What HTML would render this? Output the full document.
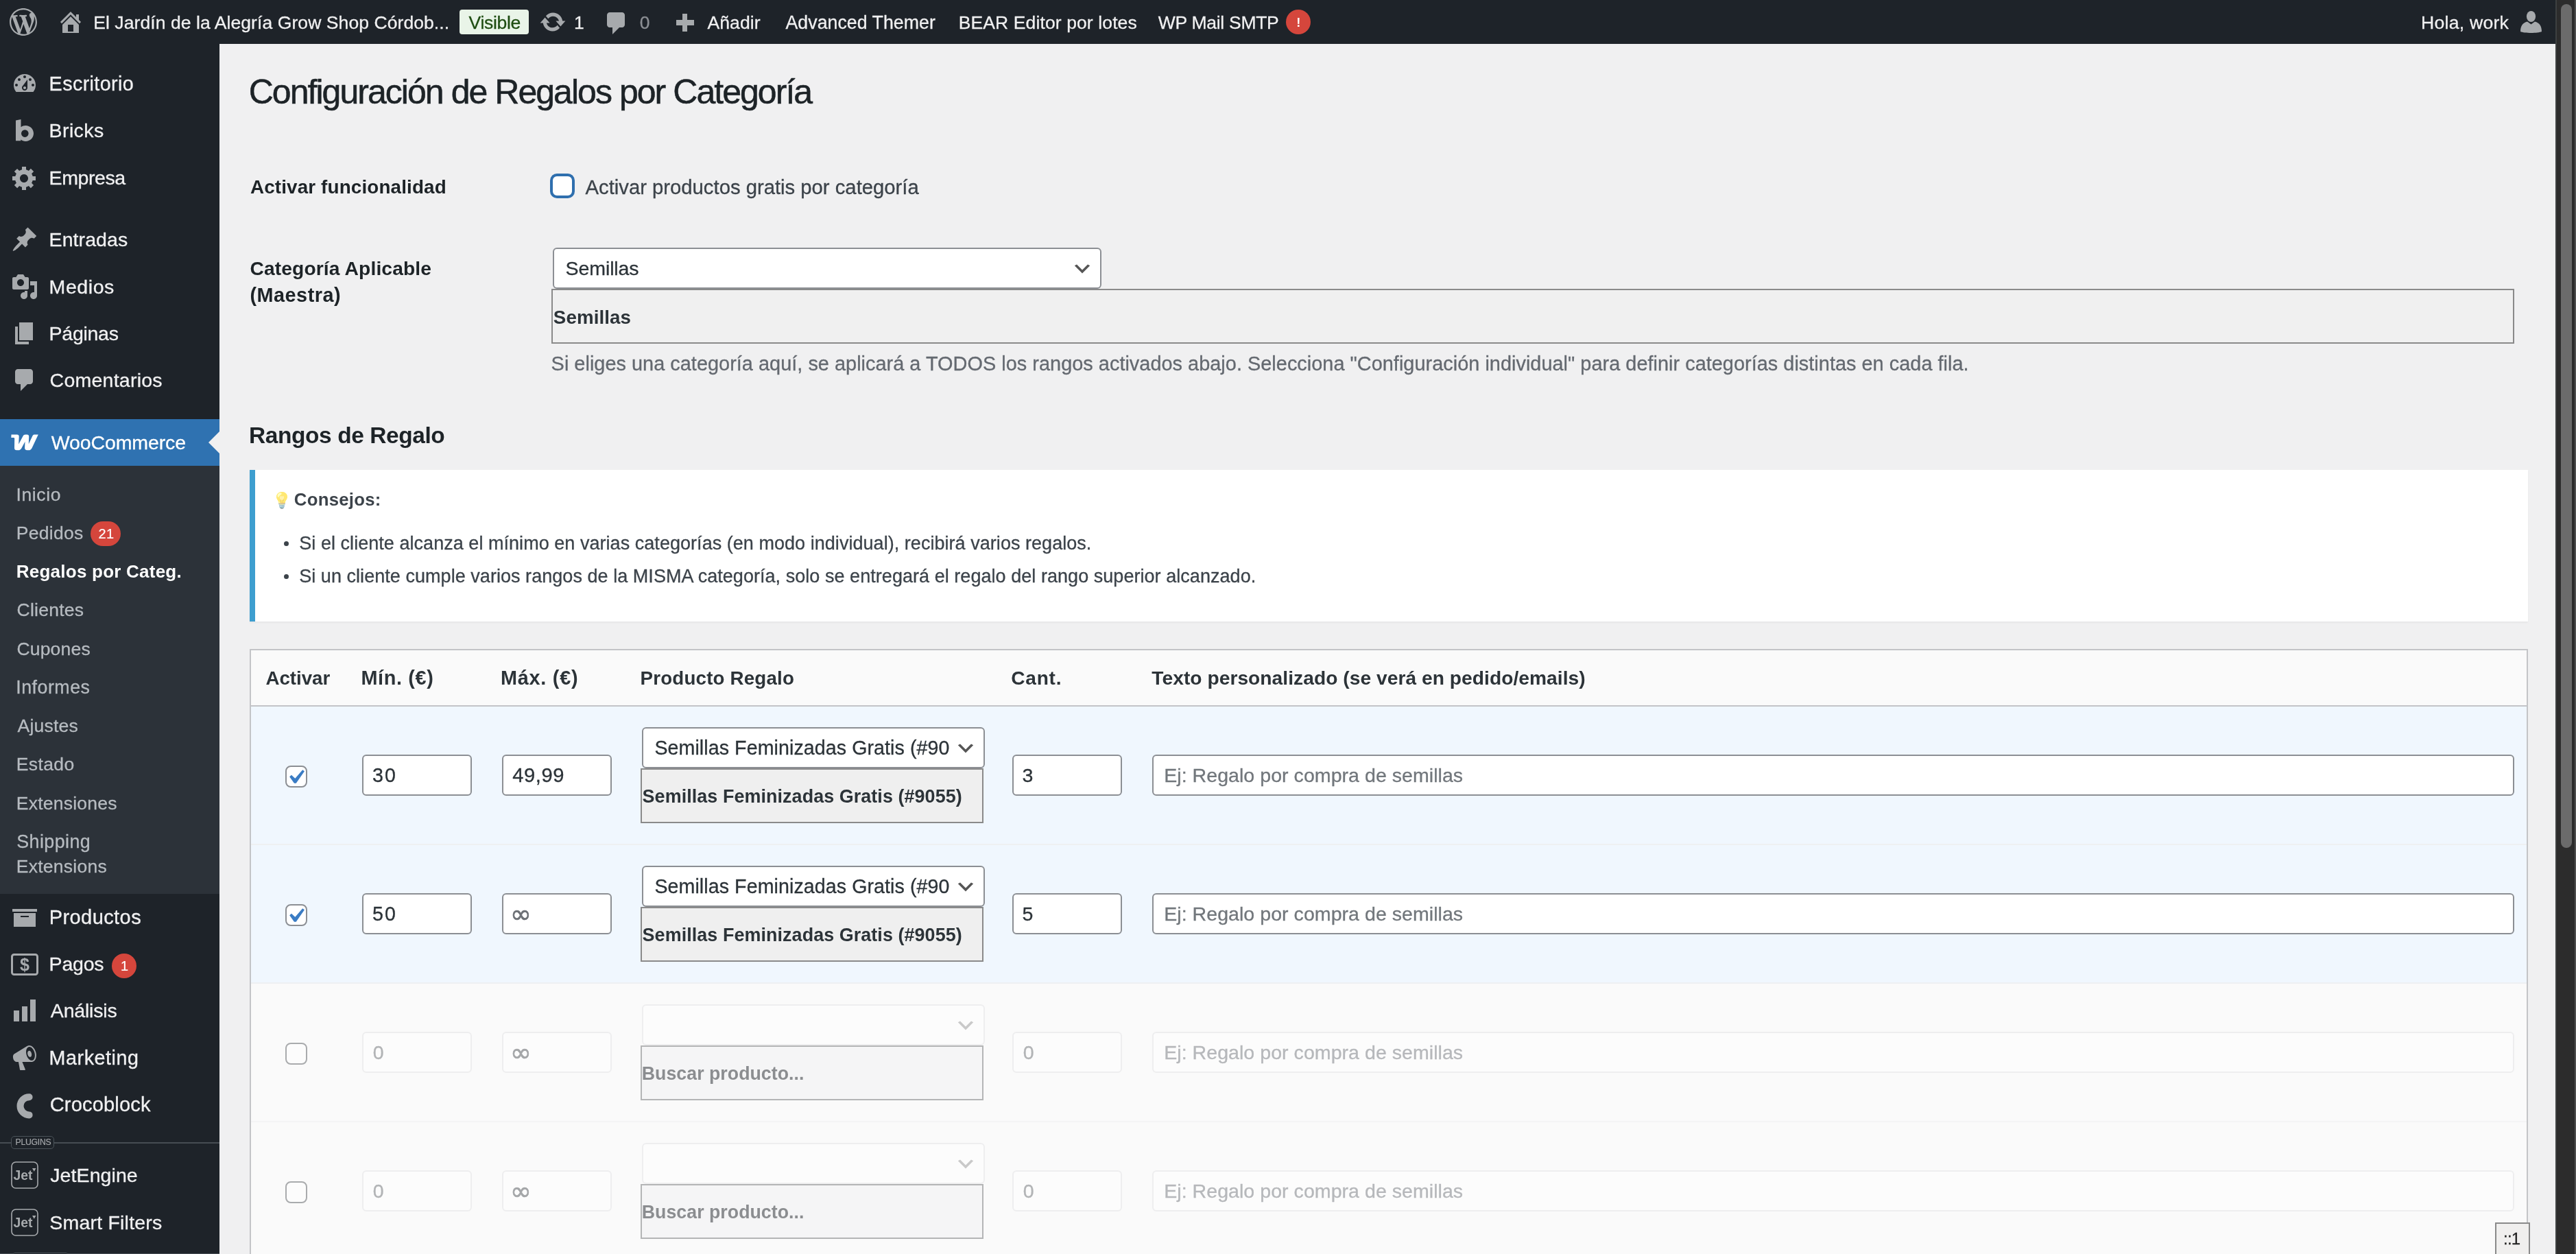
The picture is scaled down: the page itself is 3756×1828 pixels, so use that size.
<!DOCTYPE html>
<html lang="es"><head><meta charset="utf-8"><title>Configuración de Regalos por Categoría</title><style>html,body{margin:0;padding:0}body{width:3756px;height:1828px;overflow:hidden;position:relative;background:#f0f0f1;font-family:"Liberation Sans",sans-serif}
.b{position:absolute;display:block}.t{position:absolute;white-space:nowrap;display:block}</style></head><body><div class="b" style="left:0;top:0;width:3756px;height:1828px;will-change:transform">
<div class="b" style="left:0px;top:0px;width:3726px;height:64px;background:#1e2329"></div>
<div class="b" style="left:0px;top:64px;width:320px;height:1764px;background:#1e2329"></div>
<div class="b" style="left:3726px;top:0px;width:30px;height:1828px;background:#2c2c2c"></div>
<div class="b" style="left:3726px;top:0px;width:2px;height:1828px;background:#3d4040"></div>
<div class="b" style="left:3754px;top:0px;width:2px;height:1828px;background:#4f4f4f"></div>
<div class="b" style="left:3734px;top:6px;width:16px;height:1230px;background:#6b6b6b;border-radius:8px"></div>
<svg class="b" style="left:14px;top:12px" width="40" height="40" viewBox="0 0 20 20"><path fill="#a7aaad" d="M20 10c0-5.51-4.49-10-10-10C4.48 0 0 4.49 0 10c0 5.52 4.48 10 10 10 5.51 0 10-4.48 10-10zM7.78 15.37L4.37 6.22c.55-.02 1.17-.08 1.17-.08.5-.06.44-1.13-.06-1.11 0 0-1.45.11-2.37.11-.18 0-.37 0-.58-.01C4.12 2.69 6.87 1.11 10 1.11c2.33 0 4.45.87 6.05 2.34-.68-.11-1.65.39-1.65 1.58 0 .74.45 1.36.9 2.1.35.61.55 1.36.55 2.46 0 1.49-1.4 5-1.4 5l-3.03-8.37c.54-.02.82-.17.82-.17.5-.05.44-1.25-.06-1.22 0 0-1.44.12-2.38.12-.87 0-2.33-.12-2.33-.12-.5-.03-.56 1.2-.06 1.22l.92.08 1.26 3.41zM17.41 10c.24-.64.74-1.87.43-4.25.7 1.29 1.05 2.71 1.05 4.25 0 3.29-1.73 6.24-4.4 7.78.97-2.59 1.94-5.2 2.92-7.78zM6.1 18.09C3.12 16.65 1.11 13.53 1.11 10c0-1.3.23-2.48.72-3.59C3.25 10.3 4.67 14.2 6.1 18.09zm4.03-6.63l2.58 6.98c-.86.29-1.76.45-2.71.45-.79 0-1.57-.11-2.29-.33.81-2.38 1.62-4.74 2.42-7.1z"/></svg>
<svg class="b" style="left:83.4px;top:11.8px" width="40" height="40" viewBox="0 0 20 20"><path fill="#a7aaad" d="M16 8.5l1.53 1.53-1.06 1.06L10 4.62l-6.47 6.47-1.06-1.06L10 2.5l4 4v-2h2v4zm-6-2.46l6 5.99V18H4v-5.97zM12 17v-5H8v5h4z"/></svg>
<span id="t0" class="t" style="left:136.2px;top:16px;font-size:26.52px;line-height:34px;font-weight:400;color:#f0f0f1;letter-spacing:0.073px;-webkit-text-stroke:0.29px;">El Jardín de la Alegría Grow Shop Córdob...</span>
<div class="b" style="left:670px;top:14px;width:101px;height:36px;background:#e9f4e8;border-radius:4px"></div>
<span id="t1" class="t" style="left:683.6px;top:16px;font-size:26.52px;line-height:34px;font-weight:400;color:#1f4d12;letter-spacing:-0.315px;-webkit-text-stroke:0.29px;">Visible</span>
<svg class="b" style="left:786px;top:11.8px" width="40" height="40" viewBox="0 0 20 20"><path fill="#a7aaad" d="M10.2 3.28c3.53 0 6.43 2.61 6.92 6h2.08l-3.5 4-3.5-4h2.32c-.45-1.97-2.21-3.45-4.32-3.45-1.45 0-2.73.71-3.54 1.78L4.95 5.66C6.23 4.2 8.11 3.28 10.2 3.28zm-.4 13.44c-3.52 0-6.43-2.61-6.92-6H.8l3.5-4c1.17 1.33 2.33 2.67 3.5 4H5.48c.45 1.97 2.21 3.45 4.32 3.45 1.45 0 2.73-.71 3.54-1.78l1.71 1.95c-1.28 1.46-3.15 2.38-5.25 2.38z"/></svg>
<span id="t2" class="t" style="left:836.9px;top:16px;font-size:26.52px;line-height:34px;font-weight:400;color:#f0f0f1;letter-spacing:0.000px;-webkit-text-stroke:0.29px;">1</span>
<svg class="b" style="left:879px;top:14.4px" width="40" height="40" viewBox="0 0 20 20"><path fill="#a7aaad" d="M5 2h9c1.1 0 2 .9 2 2v7c0 1.1-.9 2-2 2h-2l-5 5v-5H5c-1.1 0-2-.9-2-2V4c0-1.1.9-2 2-2z"/></svg>
<span id="t3" class="t" style="left:932.8px;top:16px;font-size:26.52px;line-height:34px;font-weight:400;color:#8c8f94;letter-spacing:0.000px;-webkit-text-stroke:0.29px;">0</span>
<div class="b" style="left:985.5px;top:29.3px;width:26.2px;height:7.4px;background:#a7aaad"></div>
<div class="b" style="left:994.9px;top:20px;width:7.4px;height:26px;background:#a7aaad"></div>
<span id="t4" class="t" style="left:1031.4px;top:16px;font-size:26.57px;line-height:35px;font-weight:400;color:#f0f0f1;letter-spacing:0.093px;-webkit-text-stroke:0.29px;">Añadir</span>
<span id="t5" class="t" style="left:1145.5px;top:16px;font-size:26.74px;line-height:35px;font-weight:400;color:#f0f0f1;letter-spacing:0.024px;-webkit-text-stroke:0.29px;">Advanced Themer</span>
<span id="t6" class="t" style="left:1397.7px;top:16px;font-size:26.52px;line-height:34px;font-weight:400;color:#f0f0f1;letter-spacing:0.106px;-webkit-text-stroke:0.29px;">BEAR Editor por lotes</span>
<span id="t7" class="t" style="left:1688.8px;top:16px;font-size:26.52px;line-height:34px;font-weight:400;color:#f0f0f1;letter-spacing:-0.296px;-webkit-text-stroke:0.29px;">WP Mail SMTP</span>
<div class="b" style="left:1875px;top:14px;width:36px;height:36px;background:#d5463c;border-radius:18px"></div>
<span id="t8" class="t" style="left:1890.2px;top:21px;font-size:18.32px;line-height:24px;font-weight:700;color:#fff;letter-spacing:0.000px;">!</span>
<span id="t9" class="t" style="left:3530.0px;top:16px;font-size:26.61px;line-height:35px;font-weight:400;color:#f0f0f1;letter-spacing:0.239px;-webkit-text-stroke:0.29px;">Hola, work</span>
<svg class="b" style="left:3675px;top:16px" width="31" height="32" viewBox="0 0 31 32"><ellipse cx="15.5" cy="8" rx="6.6" ry="8" fill="#a7aaad"/><path fill="#a7aaad" d="M0 30C0 22 3 17.5 10 15.5l5.5 4 5.5-4c7 2 10 6.500 10 14.500c-5 2.600-26 2.600-31 0z"/></svg>
<svg class="b" style="left:16px;top:102.0px" width="40" height="40" viewBox="0 0 20 20"><path fill="#a7aaad" d="M3.76 16h12.48c1.1-1.37 1.76-3.11 1.76-5 0-4.42-3.58-8-8-8s-8 3.58-8 8c0 1.89.66 3.63 1.76 5zM10 4c.55 0 1 .45 1 1s-.45 1-1 1-1-.45-1-1 .45-1 1-1zM6 6c.55 0 1 .45 1 1s-.45 1-1 1-1-.45-1-1 .45-1 1-1zm8 0c.55 0 1 .45 1 1s-.45 1-1 1-1-.45-1-1 .45-1 1-1zm-5.37 5.55L12 7v6c0 1.1-.9 2-2 2s-2-.9-2-2c0-.57.24-1.08.63-1.45zM4 10c.55 0 1 .45 1 1s-.45 1-1 1-1-.45-1-1 .45-1 1-1zm12 0c.55 0 1 .45 1 1s-.45 1-1 1-1-.45-1-1 .45-1 1-1zm-5 3c0-.55-.45-1-1-1s-1 .45-1 1 .45 1 1 1 1-.45 1-1z"/></svg>
<span id="t10" class="t" style="left:71.6px;top:104px;font-size:28.74px;line-height:37px;font-weight:400;color:#f0f0f1;letter-spacing:0.383px;-webkit-text-stroke:0.32px;">Escritorio</span>
<span id="t11" class="t" style="left:71.6px;top:172px;font-size:28.56px;line-height:37px;font-weight:400;color:#f0f0f1;letter-spacing:0.372px;-webkit-text-stroke:0.31px;">Bricks</span>
<svg class="b" style="left:22.8px;top:174.0px" width="26" height="32" viewBox="0 0 26 32"><path fill="#a7aaad" fill-rule="evenodd" d="M0 1.500L7.500 0V11.300C9.500 9.800 11.800 9 14.300 9C20.800 9 26 14 26 20.500S20.800 32 14.300 32C11.600 32 9.300 31.200 7.300 29.600V31.300H0ZM13.300 15.300a5.300 5.300 0 1 0 0.010 0z"/></svg>
<svg class="b" style="left:16px;top:238.8px" width="40" height="40" viewBox="0 0 20 20"><path fill="#a7aaad" d="M18 12h-2.18c-.17.7-.44 1.35-.81 1.93l1.54 1.54-2.1 2.1-1.54-1.54c-.58.36-1.23.63-1.91.79V19H8v-2.18c-.68-.16-1.33-.43-1.91-.79l-1.54 1.54-2.12-2.12 1.54-1.54c-.36-.58-.63-1.23-.79-1.91H1V9.03h2.17c.16-.7.44-1.35.8-1.94L2.43 5.55l2.1-2.1 1.54 1.54c.58-.37 1.24-.64 1.93-.81V2h3v2.18c.68.16 1.33.43 1.91.79l1.54-1.54 2.12 2.12-1.54 1.54c.36.59.64 1.24.8 1.94H18V12zm-8.5 1.5c1.66 0 3-1.34 3-3s-1.34-3-3-3-3 1.34-3 3 1.34 3 3 3z"/></svg>
<span id="t12" class="t" style="left:71.6px;top:241px;font-size:28.56px;line-height:37px;font-weight:400;color:#f0f0f1;letter-spacing:-0.436px;-webkit-text-stroke:0.31px;">Empresa</span>
<svg class="b" style="left:16px;top:329.20000000000005px" width="40" height="40" viewBox="0 0 20 20"><path fill="#a7aaad" d="M10.44 3.02l1.82-1.82 6.36 6.35-1.83 1.82c-1.05-.68-2.48-.57-3.41.36l-.75.75c-.92.93-1.04 2.35-.35 3.41l-1.83 1.82-2.41-2.41-2.8 2.79c-.42.42-3.38 2.71-3.8 2.29s1.86-3.39 2.28-3.81l2.79-2.79L4.1 9.36l1.83-1.82c1.05.69 2.48.57 3.4-.36l.75-.75c.93-.92 1.05-2.35.36-3.41z"/></svg>
<span id="t13" class="t" style="left:71.6px;top:331px;font-size:28.56px;line-height:37px;font-weight:400;color:#f0f0f1;letter-spacing:0.045px;-webkit-text-stroke:0.31px;">Entradas</span>
<svg class="b" style="left:16px;top:397.6px" width="40" height="40" viewBox="0 0 20 20"><path fill="#a7aaad" d="M13 11V4c0-.55-.45-1-1-1h-1.67L9 1H5L3.67 3H2c-.55 0-1 .45-1 1v7c0 .55.45 1 1 1h10c.55 0 1-.45 1-1zM7 4.5c1.38 0 2.5 1.12 2.5 2.5S8.38 9.5 7 9.5 4.5 8.38 4.5 7 5.62 4.5 7 4.5zM14 6h5v10.5c0 1.38-1.12 2.5-2.5 2.5S14 17.88 14 16.5s1.12-2.5 2.5-2.5c.17 0 .34.02.5.05V9h-3V6zm-4 8.05V13h2v3.5c0 1.38-1.12 2.5-2.5 2.5S7 17.88 7 16.5 8.12 14 9.5 14c.17 0 .34.02.5.05z"/></svg>
<span id="t14" class="t" style="left:71.6px;top:400px;font-size:28.56px;line-height:37px;font-weight:400;color:#f0f0f1;letter-spacing:0.551px;-webkit-text-stroke:0.31px;">Medios</span>
<svg class="b" style="left:16px;top:466.0px" width="40" height="40" viewBox="0 0 20 20"><path fill="#a7aaad" d="M6 15V2h10v13H6zm-1 1h8v2H3V5h2v11z"/></svg>
<span id="t15" class="t" style="left:71.6px;top:468px;font-size:28.56px;line-height:37px;font-weight:400;color:#f0f0f1;letter-spacing:-0.298px;-webkit-text-stroke:0.31px;">Páginas</span>
<svg class="b" style="left:16px;top:534.4px" width="40" height="40" viewBox="0 0 20 20"><path fill="#a7aaad" d="M5 2h9c1.1 0 2 .9 2 2v7c0 1.1-.9 2-2 2h-2l-5 5v-5H5c-1.1 0-2-.9-2-2V4c0-1.1.9-2 2-2z"/></svg>
<span id="t16" class="t" style="left:72.6px;top:536px;font-size:28.56px;line-height:37px;font-weight:400;color:#f0f0f1;letter-spacing:0.214px;-webkit-text-stroke:0.31px;">Comentarios</span>
<div class="b" style="left:0px;top:610.8px;width:320px;height:67.8px;background:#2f72b1"></div>
<svg class="b" style="left:304px;top:628.6px" width="16" height="32" viewBox="0 0 16 32"><path fill="#f0f0f1" d="M16 0V32L0 16z"/></svg>
<span id="t17" class="t" style="left:74.8px;top:627px;font-size:28.56px;line-height:37px;font-weight:400;color:#fff;letter-spacing:-0.146px;-webkit-text-stroke:0.31px;">WooCommerce</span>
<svg class="b" style="left:15.800px;top:633px" width="40" height="23.500" viewBox="0 0 40 23.500"><path fill="#fff" d="M0.500 0.600H8.800C10.800 0.600 11.800 1.700 11.700 3.600L11.200 14.500L17.500 2.800C18.300 1.300 19.400 0.600 21 0.600H23.300C25.300 0.600 26.300 1.700 26.200 3.600L25.800 14.200L31.500 2.300C32.100 1.100 33 0.500 34.400 0.500H39.800L30.500 20.200C29.500 22.300 28 23.300 25.800 23.300H23.500C21.100 23.300 20 22.100 20.100 19.800L20.500 10.800L15.300 20.500C14.200 22.400 12.800 23.300 10.700 23.300H8.300C6.100 23.300 5 22.200 5 20L5.200 6.500C5.200 5.500 4.700 5 3.800 5H0.300z"/></svg>
<div class="b" style="left:0px;top:678.6px;width:320px;height:624px;background:#2c3239"></div>
<span id="t18" class="t" style="left:23.4px;top:704px;font-size:26.52px;line-height:34px;font-weight:400;color:#b6bbc0;letter-spacing:0.622px;-webkit-text-stroke:0.29px;">Inicio</span>
<span id="t19" class="t" style="left:23.7px;top:760px;font-size:26.52px;line-height:34px;font-weight:400;color:#b6bbc0;letter-spacing:0.282px;-webkit-text-stroke:0.29px;">Pedidos</span>
<div class="b" style="left:132px;top:760px;width:44px;height:36px;background:#d5463c;border-radius:18px"></div>
<span id="t20" class="t" style="left:143.4px;top:765px;font-size:19.89px;line-height:26px;font-weight:400;color:#fff;letter-spacing:0.549px;-webkit-text-stroke:0.22px;">21</span>
<span id="t21" class="t" style="left:23.8px;top:816px;font-size:26.04px;line-height:34px;font-weight:700;color:#fff;letter-spacing:0.216px;">Regalos por Categ.</span>
<span id="t22" class="t" style="left:24.6px;top:872px;font-size:26.52px;line-height:34px;font-weight:400;color:#b6bbc0;letter-spacing:0.237px;-webkit-text-stroke:0.29px;">Clientes</span>
<span id="t23" class="t" style="left:24.4px;top:929px;font-size:26.52px;line-height:34px;font-weight:400;color:#b6bbc0;letter-spacing:0.196px;-webkit-text-stroke:0.29px;">Cupones</span>
<span id="t24" class="t" style="left:23.3px;top:985px;font-size:26.83px;line-height:35px;font-weight:400;color:#b6bbc0;letter-spacing:0.473px;-webkit-text-stroke:0.30px;">Informes</span>
<span id="t25" class="t" style="left:25.5px;top:1041px;font-size:26.59px;line-height:35px;font-weight:400;color:#b6bbc0;letter-spacing:0.193px;-webkit-text-stroke:0.29px;">Ajustes</span>
<span id="t26" class="t" style="left:23.8px;top:1097px;font-size:26.52px;line-height:34px;font-weight:400;color:#b6bbc0;letter-spacing:0.369px;-webkit-text-stroke:0.29px;">Estado</span>
<span id="t27" class="t" style="left:23.8px;top:1154px;font-size:26.52px;line-height:34px;font-weight:400;color:#b6bbc0;letter-spacing:0.216px;-webkit-text-stroke:0.29px;">Extensiones</span>
<span id="t28" class="t" style="left:24.3px;top:1210px;font-size:26.82px;line-height:35px;font-weight:400;color:#b6bbc0;letter-spacing:0.441px;-webkit-text-stroke:0.30px;">Shipping</span>
<span id="t29" class="t" style="left:23.8px;top:1246px;font-size:26.52px;line-height:34px;font-weight:400;color:#b6bbc0;letter-spacing:0.243px;-webkit-text-stroke:0.29px;">Extensions</span>
<svg class="b" style="left:16px;top:1316.6px" width="40" height="40" viewBox="0 0 20 20"><path fill="#a7aaad" d="M19 4v2H1V4h18zM2 7h16v10H2V7zm11 3V9H7v1h6z"/></svg>
<span id="t30" class="t" style="left:71.7px;top:1318px;font-size:29.03px;line-height:38px;font-weight:400;color:#f0f0f1;letter-spacing:0.414px;-webkit-text-stroke:0.32px;">Productos</span>
<span id="t31" class="t" style="left:71.6px;top:1387px;font-size:28.56px;line-height:37px;font-weight:400;color:#f0f0f1;letter-spacing:-0.225px;-webkit-text-stroke:0.31px;">Pagos</span>
<svg class="b" style="left:16px;top:1389.7px" width="40" height="32" viewBox="0 0 40 32"><rect x="1.500" y="1.500" width="37" height="29" rx="3" fill="none" stroke="#a7aaad" stroke-width="3"/><text x="20" y="25" font-family="Liberation Sans,sans-serif" font-weight="700" font-size="25" text-anchor="middle" fill="#a7aaad">$</text></svg>
<div class="b" style="left:163.4px;top:1389.7px;width:36px;height:36px;background:#d5463c;border-radius:18px"></div>
<span id="t32" class="t" style="left:176.0px;top:1395px;font-size:19.89px;line-height:26px;font-weight:400;color:#fff;letter-spacing:0.000px;-webkit-text-stroke:0.22px;">1</span>
<svg class="b" style="left:16px;top:1453.4px" width="40" height="40" viewBox="0 0 20 20"><path fill="#a7aaad" d="M18 18V2h-4v16h4zm-6 0V7H8v11h4zm-6 0v-8H2v8h4z"/></svg>
<span id="t33" class="t" style="left:73.8px;top:1455px;font-size:28.56px;line-height:37px;font-weight:400;color:#f0f0f1;letter-spacing:-0.212px;-webkit-text-stroke:0.31px;">Análisis</span>
<svg class="b" style="left:16px;top:1521.8000000000002px" width="40" height="40" viewBox="0 0 20 20"><path fill="#a7aaad" d="M18.15 5.94c.46 1.62.38 3.22-.02 4.48-.42 1.28-1.26 2.18-2.3 2.48-.16.06-.26.06-.4.06-.06.02-.12.02-.18.02-.06.02-.14.02-.22.02h-6.8l2.22 5.5c.02.14-.06.26-.14.34-.08.1-.24.16-.34.16H6.95c-.1 0-.26-.06-.34-.16-.08-.08-.16-.2-.14-.34l-1-5.5H4.25l-.02-.02c-.5.06-1.08-.18-1.54-.62s-.88-1.08-1.06-1.88c-.24-.8-.2-1.56-.02-2.2.18-.62.58-1.08 1.06-1.3l.02-.02 9-5.4c.1-.06.18-.1.24-.16.06-.04.14-.08.24-.12.16-.08.28-.12.5-.18 1.04-.3 2.24.1 3.22.98s1.84 2.24 2.26 3.86zm-2.58 5.98h-.02c.4-.1.74-.34 1.04-.7.58-.7.86-1.76.86-3.04 0-.64-.1-1.3-.28-1.98-.34-1.36-1.02-2.5-1.78-3.24s-1.68-1.1-2.46-.88c-.82.22-1.4.96-1.7 2-.32 1.04-.28 2.36.06 3.72.38 1.36 1 2.5 1.8 3.24.78.74 1.62 1.1 2.48.88zm-2.54-7.08c.22-.04.42-.02.62.04.38.16.76.48 1.02 1s.42 1.2.42 1.78c0 .3-.04.56-.12.8-.18.48-.44.84-.86.94-.34.1-.8-.06-1.14-.4s-.64-.86-.78-1.5c-.18-.62-.12-1.24.02-1.72s.48-.84.82-.94z"/></svg>
<span id="t34" class="t" style="left:71.6px;top:1524px;font-size:28.72px;line-height:37px;font-weight:400;color:#f0f0f1;letter-spacing:0.529px;-webkit-text-stroke:0.32px;">Marketing</span>
<span id="t35" class="t" style="left:72.7px;top:1591px;font-size:29.09px;line-height:38px;font-weight:400;color:#f0f0f1;letter-spacing:0.157px;-webkit-text-stroke:0.32px;">Crocoblock</span>
<svg class="b" style="left:20px;top:1590.2px" width="36" height="44" viewBox="0 0 36 44"><path fill="none" stroke="#a7aaad" stroke-width="10" stroke-linecap="round" d="M22.600 9.200A13.100 13.100 0 0 0 22.600 35.400"/></svg>
<div class="b" style="left:0px;top:1665.2px;width:320px;height:2px;background:#464d53"></div>
<div class="b" style="left:16px;top:1655.8px;width:63px;height:19px;background:#1e2329;border:1.500px solid #4b5359;border-radius:5px;box-sizing:border-box"></div>
<span id="t36" class="t" style="left:22.5px;top:1657px;font-size:12.24px;line-height:16px;font-weight:400;color:#a7aaad;letter-spacing:-0.262px;-webkit-text-stroke:0.13px;">PLUGINS</span>
<svg class="b" style="left:16px;top:1693px" width="40" height="40" viewBox="0 0 40 40"><rect x="1" y="1" width="38" height="38" rx="6" fill="none" stroke="#a7aaad" stroke-width="1.600"/><text x="3.500" y="26.500" font-family="Liberation Sans,sans-serif" font-weight="700" font-size="19.500" textLength="28" lengthAdjust="spacingAndGlyphs" fill="#a7aaad">Jet</text><path fill="#a7aaad" d="M31 10h5.500l-2.750 4.800z"/></svg>
<span id="t37" class="t" style="left:73.3px;top:1695px;font-size:28.56px;line-height:37px;font-weight:400;color:#f0f0f1;letter-spacing:0.052px;-webkit-text-stroke:0.31px;">JetEngine</span>
<svg class="b" style="left:16px;top:1762px" width="40" height="40" viewBox="0 0 40 40"><rect x="1" y="1" width="38" height="38" rx="6" fill="none" stroke="#a7aaad" stroke-width="1.600"/><text x="3.500" y="26.500" font-family="Liberation Sans,sans-serif" font-weight="700" font-size="19.500" textLength="28" lengthAdjust="spacingAndGlyphs" fill="#a7aaad">Jet</text><path fill="#a7aaad" d="M31 10h5.500l-2.750 4.800z"/></svg>
<span id="t38" class="t" style="left:72.3px;top:1764px;font-size:28.56px;line-height:37px;font-weight:400;color:#f0f0f1;letter-spacing:0.184px;-webkit-text-stroke:0.31px;">Smart Filters</span>
<div class="b" style="left:0px;top:1826.5px;width:320px;height:2px;background:#464d53"></div>
<div class="b" style="left:17.7px;top:1826px;width:82px;height:8px;background:#1e2329;border:1.500px solid #4b5359;border-radius:5px;box-sizing:border-box"></div>
<span id="t39" class="t" style="left:362.7px;top:102px;font-size:50.0px;line-height:65px;font-weight:400;color:#1d2327;letter-spacing:-1.961px;-webkit-text-stroke:0.55px;">Configuración de Regalos por Categoría</span>
<span id="t40" class="t" style="left:364.9px;top:255px;font-size:27.83px;line-height:36px;font-weight:700;color:#1d2327;letter-spacing:0.140px;">Activar funcionalidad</span>
<div class="b" style="left:804px;top:255px;width:32px;height:32px;background:#fff;border:2px solid #2f6fae;border-radius:8px;box-sizing:border-box;box-shadow:0 0 0 2px #2f6fae"></div>
<span id="t41" class="t" style="left:853.5px;top:254px;font-size:29.27px;line-height:38px;font-weight:400;color:#3c434a;letter-spacing:-0.004px;-webkit-text-stroke:0.32px;">Activar productos gratis por categoría</span>
<span id="t42" class="t" style="left:364.4px;top:373px;font-size:28.21px;line-height:37px;font-weight:700;color:#1d2327;letter-spacing:0.130px;">Categoría Aplicable</span>
<span id="t43" class="t" style="left:364.4px;top:412px;font-size:28.84px;line-height:37px;font-weight:700;color:#1d2327;letter-spacing:0.512px;">(Maestra)</span>
<div class="b" style="left:806px;top:361px;width:800px;height:60px;background:#fff;border:2px solid #8c8f94;border-radius:6px;box-sizing:border-box"></div>
<span id="t44" class="t" style="left:824.6px;top:373px;font-size:28.56px;line-height:37px;font-weight:400;color:#2c3338;letter-spacing:-0.121px;-webkit-text-stroke:0.31px;">Semillas</span>
<svg class="b" style="left:1562px;top:376.2px;opacity:1" width="32" height="32" viewBox="0 0 20 20"><path fill="#555" d="M5 6l5 5 5-5 2 1-7 7-7-7 2-1z"/></svg>
<div class="b" style="left:804px;top:421px;width:2862px;height:80px;background:#f0f0f0;border:2px solid #8a8a8a;box-sizing:border-box"></div>
<span id="t45" class="t" style="left:806.8px;top:445px;font-size:27.72px;line-height:36px;font-weight:700;color:#2c3338;letter-spacing:0.103px;">Semillas</span>
<span id="t46" class="t" style="left:803.6px;top:511px;font-size:28.88px;line-height:38px;font-weight:400;color:#646970;letter-spacing:0.026px;-webkit-text-stroke:0.32px;">Si eliges una categoría aquí, se aplicará a TODOS los rangos activados abajo. Selecciona &quot;Configuración individual&quot; para definir categorías distintas en cada fila.</span>
<span id="t47" class="t" style="left:363.1px;top:613px;font-size:33.46px;line-height:43px;font-weight:700;color:#1d2327;letter-spacing:-0.412px;">Rangos de Regalo</span>
<div class="b" style="left:364px;top:685px;width:3322px;height:220.5px;background:#fff;box-shadow:0 2px 2px rgba(0,0,0,.04)"></div>
<div class="b" style="left:364px;top:685px;width:8px;height:220.5px;background:#3d9ecf"></div>
<span id="t48" class="t" style="left:396.5px;top:715px;font-size:22.5px;line-height:29px;font-weight:400;color:#c9a227;letter-spacing:0.000px;-webkit-text-stroke:0.25px;opacity:.55;">💡</span>
<span id="t49" class="t" style="left:428.8px;top:712px;font-size:25.74px;line-height:33px;font-weight:700;color:#3c434a;letter-spacing:0.274px;">Consejos:</span>
<div class="b" style="left:413.5px;top:788.5px;width:7px;height:7px;background:#3c434a;border-radius:50%"></div>
<span id="t50" class="t" style="left:436.3px;top:775px;font-size:27.01px;line-height:35px;font-weight:400;color:#3c434a;letter-spacing:0.041px;-webkit-text-stroke:0.30px;">Si el cliente alcanza el mínimo en varias categorías (en modo individual), recibirá varios regalos.</span>
<div class="b" style="left:413.5px;top:836.8px;width:7px;height:7px;background:#3c434a;border-radius:50%"></div>
<span id="t51" class="t" style="left:436.2px;top:823px;font-size:27.03px;line-height:35px;font-weight:400;color:#3c434a;letter-spacing:0.039px;-webkit-text-stroke:0.30px;">Si un cliente cumple varios rangos de la MISMA categoría, solo se entregará el regalo del rango superior alcanzado.</span>
<div class="b" style="left:364px;top:946px;width:3322px;height:900px;background:#fafafa;border:2px solid #c3c4c7;box-sizing:border-box"></div>
<div class="b" style="left:366px;top:1028px;width:3318px;height:2px;background:#c3c4c7"></div>
<span id="t52" class="t" style="left:387.4px;top:971px;font-size:27.72px;line-height:36px;font-weight:700;color:#2c3338;letter-spacing:-0.032px;">Activar</span>
<span id="t53" class="t" style="left:526.4px;top:970px;font-size:28.84px;line-height:37px;font-weight:700;color:#2c3338;letter-spacing:0.646px;">Mín. (€)</span>
<span id="t54" class="t" style="left:729.9px;top:970px;font-size:28.84px;line-height:37px;font-weight:700;color:#2c3338;letter-spacing:0.777px;">Máx. (€)</span>
<span id="t55" class="t" style="left:933.6px;top:971px;font-size:27.72px;line-height:36px;font-weight:700;color:#2c3338;letter-spacing:0.178px;">Producto Regalo</span>
<span id="t56" class="t" style="left:1474.2px;top:970px;font-size:28.08px;line-height:37px;font-weight:700;color:#2c3338;letter-spacing:0.788px;">Cant.</span>
<span id="t57" class="t" style="left:1679.3px;top:970px;font-size:28.18px;line-height:37px;font-weight:700;color:#2c3338;letter-spacing:0.042px;">Texto personalizado (se verá en pedido/emails)</span>
<div class="b" style="left:366px;top:1030px;width:3318px;height:200px;background:#f0f7fe"></div>
<div class="b" style="left:366px;top:1230px;width:3318px;height:2px;background:#eef0f2"></div>
<div class="b" style="left:416px;top:1116px;width:32px;height:32px;background:#fff;border:2px solid #8c8f94;border-radius:8px;box-sizing:border-box"></div>
<svg class="b" style="left:410px;top:1112px" width="42" height="42" viewBox="0 0 20 20"><path fill="#3a7cc4" d="M14.83 4.89l1.340.94-5.810 8.380H9.020L5.780 9.670l1.340-1.250 2.570 2.400z"/></svg>
<div class="b" style="left:528px;top:1100px;width:160px;height:60px;background:#fff;border:2px solid #8c8f94;border-radius:6px;box-sizing:border-box"></div>
<span id="t58" class="t" style="left:543.1px;top:1112px;font-size:28.58px;line-height:37px;font-weight:400;color:#2c3338;letter-spacing:2.085px;-webkit-text-stroke:0.31px;">30</span>
<div class="b" style="left:732px;top:1100px;width:160px;height:60px;background:#fff;border:2px solid #8c8f94;border-radius:6px;box-sizing:border-box"></div>
<span id="t59" class="t" style="left:747.3px;top:1111px;font-size:29.17px;line-height:38px;font-weight:400;color:#2c3338;letter-spacing:0.529px;-webkit-text-stroke:0.32px;">49,99</span>
<div class="b" style="left:936px;top:1060px;width:500px;height:60px;background:#fff;border:2px solid #8c8f94;border-radius:6px;box-sizing:border-box"></div>
<span id="t60" class="t" style="left:954.4px;top:1072px;font-size:28.62px;line-height:37px;font-weight:400;color:#2c3338;letter-spacing:0.074px;-webkit-text-stroke:0.31px;">Semillas Feminizadas Gratis (#90</span>
<svg class="b" style="left:1392px;top:1075.2px;opacity:1" width="32" height="32" viewBox="0 0 20 20"><path fill="#555" d="M5 6l5 5 5-5 2 1-7 7-7-7 2-1z"/></svg>
<div class="b" style="left:934px;top:1120px;width:500px;height:80px;background:#efefef;border:2px solid #8a8a8a;box-sizing:border-box"></div>
<span id="t61" class="t" style="left:936.6px;top:1144px;font-size:26.92px;line-height:35px;font-weight:700;color:#2c3338;letter-spacing:0.073px;">Semillas Feminizadas Gratis (#9055)</span>
<div class="b" style="left:1476px;top:1100px;width:160px;height:60px;background:#fff;border:2px solid #8c8f94;border-radius:6px;box-sizing:border-box"></div>
<span id="t62" class="t" style="left:1490.5px;top:1112px;font-size:28.56px;line-height:37px;font-weight:400;color:#2c3338;letter-spacing:0.000px;-webkit-text-stroke:0.31px;">3</span>
<div class="b" style="left:1680px;top:1100px;width:1986px;height:60px;background:#fff;border:2px solid #8c8f94;border-radius:6px;box-sizing:border-box"></div>
<span id="t63" class="t" style="left:1697.2px;top:1112px;font-size:28.56px;line-height:37px;font-weight:400;color:#72777c;letter-spacing:0.038px;-webkit-text-stroke:0.31px;">Ej: Regalo por compra de semillas</span>
<div class="b" style="left:366px;top:1232px;width:3318px;height:200px;background:#f0f7fe"></div>
<div class="b" style="left:366px;top:1432px;width:3318px;height:2px;background:#eef0f2"></div>
<div class="b" style="left:416px;top:1318px;width:32px;height:32px;background:#fff;border:2px solid #8c8f94;border-radius:8px;box-sizing:border-box"></div>
<svg class="b" style="left:410px;top:1314px" width="42" height="42" viewBox="0 0 20 20"><path fill="#3a7cc4" d="M14.83 4.89l1.340.94-5.810 8.380H9.020L5.780 9.670l1.340-1.250 2.570 2.400z"/></svg>
<div class="b" style="left:528px;top:1302px;width:160px;height:60px;background:#fff;border:2px solid #8c8f94;border-radius:6px;box-sizing:border-box"></div>
<span id="t64" class="t" style="left:543.1px;top:1314px;font-size:28.58px;line-height:37px;font-weight:400;color:#2c3338;letter-spacing:2.117px;-webkit-text-stroke:0.31px;">50</span>
<div class="b" style="left:732px;top:1302px;width:160px;height:60px;background:#fff;border:2px solid #8c8f94;border-radius:6px;box-sizing:border-box"></div>
<span id="t65" class="t" style="left:744.1px;top:1309px;font-size:37.0px;line-height:48px;font-weight:400;color:#6c7075;letter-spacing:0.000px;font-family:'DejaVu Sans',sans-serif;-webkit-text-stroke:.7px;">∞</span>
<div class="b" style="left:936px;top:1262px;width:500px;height:60px;background:#fff;border:2px solid #8c8f94;border-radius:6px;box-sizing:border-box"></div>
<span id="t66" class="t" style="left:954.4px;top:1274px;font-size:28.62px;line-height:37px;font-weight:400;color:#2c3338;letter-spacing:0.074px;-webkit-text-stroke:0.31px;">Semillas Feminizadas Gratis (#90</span>
<svg class="b" style="left:1392px;top:1277.2px;opacity:1" width="32" height="32" viewBox="0 0 20 20"><path fill="#555" d="M5 6l5 5 5-5 2 1-7 7-7-7 2-1z"/></svg>
<div class="b" style="left:934px;top:1322px;width:500px;height:80px;background:#efefef;border:2px solid #8a8a8a;box-sizing:border-box"></div>
<span id="t67" class="t" style="left:936.6px;top:1346px;font-size:26.92px;line-height:35px;font-weight:700;color:#2c3338;letter-spacing:0.073px;">Semillas Feminizadas Gratis (#9055)</span>
<div class="b" style="left:1476px;top:1302px;width:160px;height:60px;background:#fff;border:2px solid #8c8f94;border-radius:6px;box-sizing:border-box"></div>
<span id="t68" class="t" style="left:1490.5px;top:1314px;font-size:28.56px;line-height:37px;font-weight:400;color:#2c3338;letter-spacing:0.000px;-webkit-text-stroke:0.31px;">5</span>
<div class="b" style="left:1680px;top:1302px;width:1986px;height:60px;background:#fff;border:2px solid #8c8f94;border-radius:6px;box-sizing:border-box"></div>
<span id="t69" class="t" style="left:1697.2px;top:1314px;font-size:28.56px;line-height:37px;font-weight:400;color:#72777c;letter-spacing:0.038px;-webkit-text-stroke:0.31px;">Ej: Regalo por compra de semillas</span>
<div class="b" style="left:366px;top:1434px;width:3318px;height:200px;background:#fafafa"></div>
<div class="b" style="left:366px;top:1634px;width:3318px;height:2px;background:#f4f4f5"></div>
<div class="b" style="left:416px;top:1520px;width:32px;height:32px;background:#fcfcfc;border:2px solid #a9abad;border-radius:8px;box-sizing:border-box"></div>
<div class="b" style="left:528px;top:1504px;width:160px;height:60px;background:#fcfcfc;border:2px solid #eeeeef;border-radius:6px;box-sizing:border-box"></div>
<span id="t70" class="t" style="left:543.7px;top:1516px;font-size:28.56px;line-height:37px;font-weight:400;color:#b2b4b6;letter-spacing:0.000px;-webkit-text-stroke:0.31px;">0</span>
<div class="b" style="left:732px;top:1504px;width:160px;height:60px;background:#fcfcfc;border:2px solid #eeeeef;border-radius:6px;box-sizing:border-box"></div>
<span id="t71" class="t" style="left:744.1px;top:1511px;font-size:37.0px;line-height:48px;font-weight:400;color:#a4a6a8;letter-spacing:0.000px;font-family:'DejaVu Sans',sans-serif;-webkit-text-stroke:.7px;">∞</span>
<div class="b" style="left:936px;top:1464px;width:500px;height:60px;background:#fcfcfc;border:2px solid #eeeeef;border-radius:6px;box-sizing:border-box"></div>
<svg class="b" style="left:1392px;top:1479.2px;opacity:0.3" width="32" height="32" viewBox="0 0 20 20"><path fill="#555" d="M5 6l5 5 5-5 2 1-7 7-7-7 2-1z"/></svg>
<div class="b" style="left:934px;top:1524px;width:500px;height:80px;background:#f5f5f6;border:2px solid #b4b5b6;box-sizing:border-box"></div>
<span id="t72" class="t" style="left:935.8px;top:1548px;font-size:26.73px;line-height:35px;font-weight:700;color:#8b8d90;letter-spacing:0.029px;">Buscar producto...</span>
<div class="b" style="left:1476px;top:1504px;width:160px;height:60px;background:#fcfcfc;border:2px solid #eeeeef;border-radius:6px;box-sizing:border-box"></div>
<span id="t73" class="t" style="left:1491.7px;top:1516px;font-size:28.56px;line-height:37px;font-weight:400;color:#b2b4b6;letter-spacing:0.000px;-webkit-text-stroke:0.31px;">0</span>
<div class="b" style="left:1680px;top:1504px;width:1986px;height:60px;background:#fcfcfc;border:2px solid #eeeeef;border-radius:6px;box-sizing:border-box"></div>
<span id="t74" class="t" style="left:1697.2px;top:1516px;font-size:28.56px;line-height:37px;font-weight:400;color:#b6b8bb;letter-spacing:0.038px;-webkit-text-stroke:0.31px;">Ej: Regalo por compra de semillas</span>
<div class="b" style="left:366px;top:1636px;width:3318px;height:200px;background:#fafafa"></div>
<div class="b" style="left:366px;top:1836px;width:3318px;height:2px;background:#f4f4f5"></div>
<div class="b" style="left:416px;top:1722px;width:32px;height:32px;background:#fcfcfc;border:2px solid #a9abad;border-radius:8px;box-sizing:border-box"></div>
<div class="b" style="left:528px;top:1706px;width:160px;height:60px;background:#fcfcfc;border:2px solid #eeeeef;border-radius:6px;box-sizing:border-box"></div>
<span id="t75" class="t" style="left:543.7px;top:1718px;font-size:28.56px;line-height:37px;font-weight:400;color:#b2b4b6;letter-spacing:0.000px;-webkit-text-stroke:0.31px;">0</span>
<div class="b" style="left:732px;top:1706px;width:160px;height:60px;background:#fcfcfc;border:2px solid #eeeeef;border-radius:6px;box-sizing:border-box"></div>
<span id="t76" class="t" style="left:744.1px;top:1713px;font-size:37.0px;line-height:48px;font-weight:400;color:#a4a6a8;letter-spacing:0.000px;font-family:'DejaVu Sans',sans-serif;-webkit-text-stroke:.7px;">∞</span>
<div class="b" style="left:936px;top:1666px;width:500px;height:60px;background:#fcfcfc;border:2px solid #eeeeef;border-radius:6px;box-sizing:border-box"></div>
<svg class="b" style="left:1392px;top:1681.2px;opacity:0.3" width="32" height="32" viewBox="0 0 20 20"><path fill="#555" d="M5 6l5 5 5-5 2 1-7 7-7-7 2-1z"/></svg>
<div class="b" style="left:934px;top:1726px;width:500px;height:80px;background:#f5f5f6;border:2px solid #b4b5b6;box-sizing:border-box"></div>
<span id="t77" class="t" style="left:935.8px;top:1750px;font-size:26.73px;line-height:35px;font-weight:700;color:#8b8d90;letter-spacing:0.029px;">Buscar producto...</span>
<div class="b" style="left:1476px;top:1706px;width:160px;height:60px;background:#fcfcfc;border:2px solid #eeeeef;border-radius:6px;box-sizing:border-box"></div>
<span id="t78" class="t" style="left:1491.7px;top:1718px;font-size:28.56px;line-height:37px;font-weight:400;color:#b2b4b6;letter-spacing:0.000px;-webkit-text-stroke:0.31px;">0</span>
<div class="b" style="left:1680px;top:1706px;width:1986px;height:60px;background:#fcfcfc;border:2px solid #eeeeef;border-radius:6px;box-sizing:border-box"></div>
<span id="t79" class="t" style="left:1697.2px;top:1718px;font-size:28.56px;line-height:37px;font-weight:400;color:#b6b8bb;letter-spacing:0.038px;-webkit-text-stroke:0.31px;">Ej: Regalo por compra de semillas</span>
<div class="b" style="left:3638px;top:1782px;width:51px;height:60px;background:#f0efee;border:2px solid #8a8a8a;box-sizing:border-box"></div>
<span id="t80" class="t" style="left:3650.0px;top:1790px;font-size:24.0px;line-height:31px;font-weight:400;color:#222;letter-spacing:-0.773px;-webkit-text-stroke:0.26px;">::1</span>
</div></body></html>
